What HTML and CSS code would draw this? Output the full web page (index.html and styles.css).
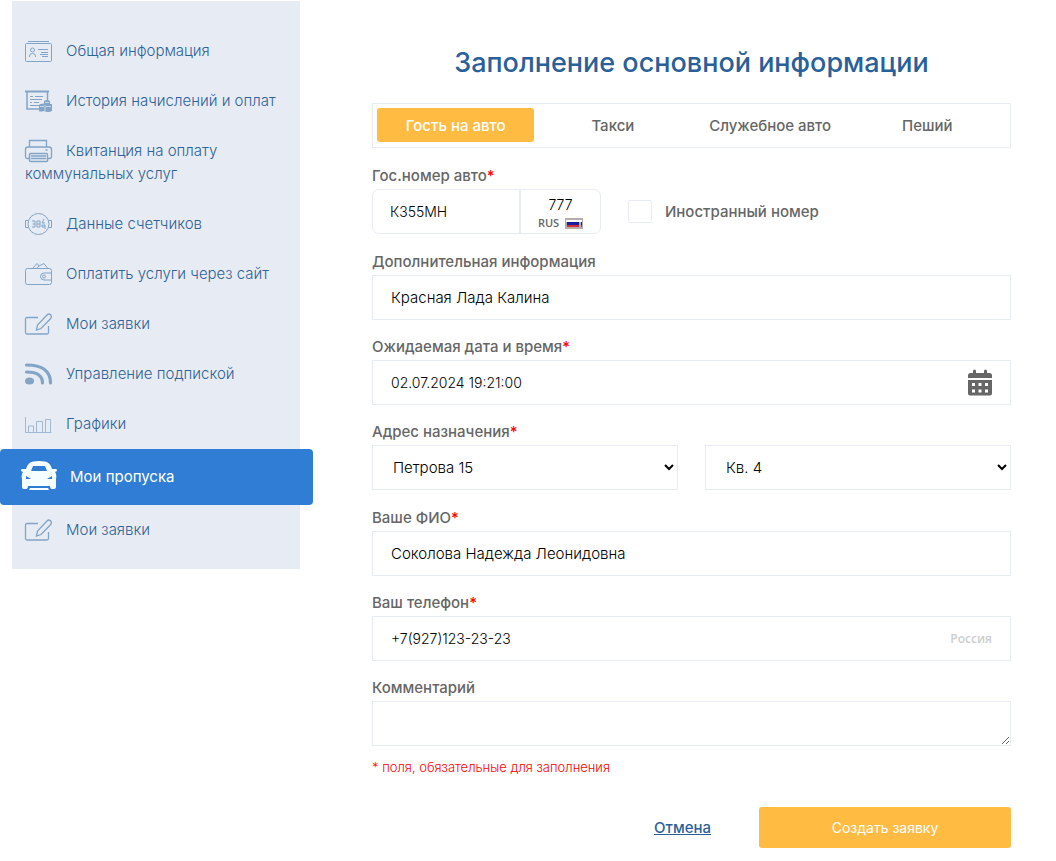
FILE: index.html
```html
<!DOCTYPE html>
<html lang="ru">
<head>
<meta charset="utf-8">
<meta name="viewport" content="width=device-width, initial-scale=1">
<title>Мои пропуска</title>
<link rel="stylesheet" href="styles.css">
</head>
<body>
<div class="page">
  <nav class="sidebar">
    <a class="nav-item" href="#"><svg class="nav-icon" viewBox="0 0 27 22"><path d="M3 1.500h21" /><rect x=".5" y="3.500" width="26" height="18" rx="1"/><circle cx="7.500" cy="10" r="2"/><path d="M4.500 17v-1q0-2.500 3-2.500t3 2.500v1M13 9.500h10M16 12.500h7M15 14.500h8M17 16.500h6"/></svg>Общая информация</a>
    <a class="nav-item" href="#"><svg class="nav-icon" viewBox="0 0 27 22"><path d="M0 1.500h24" stroke-width="2"/><path d="M2 2v17h12M22.500 2v8" stroke-width="1.500"/><path d="M5 6.500h3M10 6.500h8M5 9.500h12M5 12.500h2M9 12.500h5M5 15.500h9"/><path class="solid" d="M19 11.500q0-1.500 3-1.500t3 1.500V14h2v7q-2 1-4 1t-4-1q-4 1-5 0v-6q1-1.500 5-1.500z"/><path class="cut" d="M15 16.500h4M21 16.500h5M20 15v6M20 12.500h4"/></svg>История начислений и оплат</a>
    <a class="nav-item" href="#"><svg class="nav-icon" viewBox="0 0 27 22"><path d="M4.500 7V.5h17V7M4 18.500H2.500q-2 0-2-2v-7q0-2.500 2.500-2.500h21q2.500 0 2.500 2.500v7q0 2-2 2H23" stroke-width="1.300"/><rect x="4.500" y="13.500" width="18" height="8" rx="1" stroke-width="1.500"/><path d="M6 16h15M6 18.500h15M20.500 10h2" stroke-width="1.500"/></svg>Квитанция на оплату коммунальных услуг</a>
    <a class="nav-item" href="#"><svg class="nav-icon" viewBox="0 0 27 22"><circle cx="13.500" cy="11" r="10.500"/><path d="M3 7.500H.5v7H3M24 7.500h2.500v7H24M7 8h3v6H7M7.500 11H10M12 8h3v6h-3zM12 11h3M19 6l-2 4h3M17 12h3v4M17 12v2h3"/></svg>Данные счетчиков</a>
    <a class="nav-item" href="#"><svg class="nav-icon" viewBox="0 0 27 22"><path d="M8 5l4-4.500L14 3l-2 2M14 3l5-2.500L22.500 5"/><rect x=".5" y="5.500" width="26" height="16" rx="2"/><path d="M26.500 10H19a3 3 0 0 0 0 7h7.500"/><circle cx="19" cy="13.500" r="1.500"/></svg>Оплатить услуги через сайт</a>
    <a class="nav-item" href="#"><svg class="nav-icon" viewBox="0 0 27 22"><path d="M13 4.500H2q-1.500 0-1.500 1.500v13.500q0 1.500 1.500 1.500h20q1.500 0 1.500-1.500V13" stroke-width="1.300"/><path d="M11.500 17l1-5L22 2q1.800-1.800 3.500-.2T25.700 5.500L16 15.500z" stroke-width="1.300"/></svg>Мои заявки</a>
    <a class="nav-item" href="#"><svg class="nav-icon" viewBox="0 0 27 22"><ellipse class="solid" cx="4.500" cy="18" rx="4.500" ry="3.500"/><path d="M1.500 9q16 0 16 11M1.500 2q24 0 24 18" stroke-width="3.200" stroke-linecap="round"/></svg>Управление подпиской</a>
    <a class="nav-item" href="#"><svg class="nav-icon" viewBox="0 0 27 22"><path d="M.5 4v15.500h26M3.500 19v-6h5v6M11.500 19V8.500h6V19M20.500 19V6.500h5V19" stroke-opacity=".7"/></svg>Графики</a>
    <a class="nav-item nav-item-active" href="#" aria-current="page"><svg class="car-icon" viewBox="0 0 36 30"><path fill-rule="evenodd" d="M5 8Q7 1 12 .5Q18-.5 24 .5Q29 1 31 8h4q1 0 1 2l-2 1q2 2 1 7v8q0 2-2 2h-2q-2 0-2-3H7q0 3-2 3H3q-2 0-2-2v-8q-1-5 1-7l-2-1Q0 8 1 8zM12 5l-2 5h16l-2-5zM5 15v3h5zM31 15v3h-5z"/><path d="M9 27h18l1 2H8z"/></svg>Мои пропуска</a>
    <a class="nav-item" href="#"><svg class="nav-icon" viewBox="0 0 27 22"><path d="M13 4.500H2q-1.500 0-1.500 1.500v13.500q0 1.500 1.500 1.500h20q1.500 0 1.500-1.500V13" stroke-width="1.300"/><path d="M11.500 17l1-5L22 2q1.800-1.800 3.500-.2T25.700 5.500L16 15.500z" stroke-width="1.300"/></svg>Мои заявки</a>
  </nav>

  <main class="content">
    <h1 class="title">Заполнение основной информации</h1>
    <div class="tabs">
      <button class="tab tab-active" type="button">Гость на авто</button>
      <button class="tab" type="button">Такси</button>
      <button class="tab" type="button">Служебное авто</button>
      <button class="tab" type="button">Пеший</button>
    </div>
    <form class="form">
      <div class="field">
        <label class="label" for="plate">Гос.номер авто<span class="required">*</span></label>
        <div class="plate-row">
          <div class="plate">
            <input class="plate-number" id="plate" type="text" value="К355МН">
            <div class="plate-side">
              <input class="plate-region" type="text" value="777" aria-label="Код региона">
              <span class="plate-country">RUS
                <svg class="flag" viewBox="0 0 18 11"><path fill="#b5acb0" d="M0 0h18v11H0z"/><path fill="#fff" d="M1 2h16v2H1z"/><path fill="#17209b" d="M2 4h12v3H2z"/><path fill="#d32d35" d="M2 7h12v2H2z"/><path fill="#17209b" d="M16 4h1v3h-1z"/><path fill="#d32d35" d="M16 7h1v2h-1z"/></svg>
              </span>
            </div>
          </div>
          <label class="foreign"><input class="checkbox" type="checkbox">Иностранный номер</label>
        </div>
      </div>
      <div class="field">
        <label class="label" for="info">Дополнительная информация</label>
        <div class="control"><input class="input" id="info" type="text" value="Красная Лада Калина"></div>
      </div>
      <div class="field">
        <label class="label" for="date">Ожидаемая дата и время<span class="required">*</span></label>
        <div class="control">
          <input class="input input-digits" id="date" type="text" value="02.07.2024 19:21:00">
          <button class="calendar" type="button" aria-label="Выбрать дату"><svg class="calendar-icon" viewBox="0 0 24 27"><path fill-rule="evenodd" d="M5 4V2q0-1.500 1.500-1.500T8 2v2h8V2q0-1.500 1.500-1.500T19 2v2h2.500Q24 4 24 6.500V9H0V6.500Q0 4 2.500 4zM0 11h24v13.500q0 2-2 2H2q-2 0-2-2zM4 14v3h3v-3zM10.500 14v3h3v-3zM17 14v3h3v-3zM4 20.500v3h3v-3zM10.500 20.500v3h3v-3zM17 20.500v3h3v-3z"/></svg></button>
        </div>
      </div>
      <div class="field">
        <label class="label" for="address">Адрес назначения<span class="required">*</span></label>
        <div class="address-row">
          <select class="select" id="address"><option>Петрова 15</option></select>
          <select class="select" aria-label="Квартира"><option>Кв. 4</option></select>
        </div>
      </div>
      <div class="field">
        <label class="label" for="name">Ваше ФИО<span class="required">*</span></label>
        <div class="control"><input class="input" id="name" type="text" value="Соколова Надежда Леонидовна"></div>
      </div>
      <div class="field">
        <label class="label" for="phone">Ваш телефон<span class="required">*</span></label>
        <div class="control"><input class="input input-digits" id="phone" type="tel" value="+7(927)123-23-23"><span class="country">Россия</span></div>
      </div>
      <div class="field">
        <label class="label" for="comment">Комментарий</label>
        <textarea class="comment" id="comment"></textarea>
      </div>
      <p class="note">* поля, обязательные для заполнения</p>
      <div class="actions">
        <a class="cancel" href="#">Отмена</a>
        <button class="submit" type="submit">Создать заявку</button>
      </div>
    </form>
  </main>
</div>
</body>
</html>
```
FILE: styles.css
```css
* {
  box-sizing: border-box;
}

body {
  margin: 0;
  background: #fff;
  color: #000;
  font-family: Inter, "Open Sans", sans-serif;
  font-size: 14px;
}

button,
input,
select,
textarea {
  font: inherit;
  color: inherit;
}

.page {
  display: flex;
  align-items: flex-start;
  gap: 72px;
  padding: 1px 45px 12px 12px;
}

.sidebar {
  flex: 0 0 288px;
  padding: 25px 0 14px;
  background: #e7ecf4;
}

.nav-item {
  display: block;
  padding: 13px 13px 14px;
  color: #2f6299;
  font-size: 15px;
  font-weight: 300;
  line-height: 23px;
  text-decoration: none;
}

.nav-icon {
  float: left;
  width: 27px;
  height: 22px;
  margin: 1px 14px 0 0;
  fill: none;
  stroke: #82a4c6;
  overflow: visible;
}

.nav-icon .solid {
  fill: #82a4c6;
  stroke: none;
}

.nav-icon .cut {
  stroke: #e7ecf4;
  stroke-opacity: .7;
}

.nav-item-active {
  display: flex;
  align-items: center;
  gap: 13px;
  height: 56px;
  margin: 0 -13px 0 -12px;
  padding: 0 21px 2px;
  border-radius: 4px;
  background: #2f7dd5;
  color: #fff;
  font-weight: 400;
}

.car-icon {
  width: 36px;
  height: 30px;
  fill: #f5ffff;
}

.content {
  flex: 1;
  min-width: 0;
}

.title {
  margin: 0;
  padding: 44px 0 22px;
  color: #2a6099;
  font-size: 27px;
  font-weight: 500;
  line-height: 36px;
  text-align: center;
}

.tabs {
  display: grid;
  grid-template-columns: repeat(4, 1fr);
  height: 45px;
  padding: 4px;
  border: 1px solid #e7ecf4;
}

.tab {
  height: 34px;
  padding: 0;
  border: 0;
  border-radius: 3px;
  background: none;
  color: #666;
  font-size: 15px;
  font-weight: 500;
}

.tab-active {
  background: #ffbb42;
  color: #fff;
}

.form {
  padding-top: 18px;
}

.field {
  margin-bottom: 17px;
}

.label {
  display: block;
  margin-bottom: 3px;
  color: #666;
  font-size: 15px;
  font-weight: 500;
  line-height: 20px;
}

.required {
  color: #f00;
}

.control {
  display: flex;
  align-items: center;
  height: 45px;
  padding: 0 18px;
  border: 1px solid #e7ecf4;
}

.input {
  flex: 1;
  min-width: 0;
  height: 43px;
  padding: 0;
  border: 0;
  background: none;
  font-size: 15px;
  font-weight: 300;
  outline: 0;
}

.input-digits {
  font-size: 14px;
}

.plate-row,
.address-row {
  min-height: 46px;
}

.plate-row {
  display: flex;
  align-items: flex-start;
  gap: 27px;
}

.plate {
  display: flex;
  width: 229px;
  height: 45px;
  border: 1px solid #e7ecf4;
  border-radius: 7px;
}

.plate-number {
  flex: 1;
  min-width: 0;
  padding: 0 17px;
  border: 0;
  border-right: 2px solid #e7ecf4;
  background: none;
  font-weight: 300;
}

.plate-side {
  display: flex;
  flex-direction: column;
  align-items: center;
  width: 79px;
  padding-top: 4px;
}

.plate-region {
  width: 60px;
  height: 20px;
  padding: 0;
  border: 0;
  background: none;
  font-weight: 300;
  text-align: center;
}

.plate-country {
  display: flex;
  align-items: center;
  gap: 6px;
  color: #666;
  font-family: "Open Sans", sans-serif;
  font-size: 11px;
  font-weight: 600;
  line-height: 18px;
}

.flag {
  width: 18px;
  height: 11px;
}

.foreign {
  display: flex;
  align-items: center;
  gap: 13px;
  height: 45px;
  color: #666;
  font-size: 15px;
  font-weight: 500;
}

.checkbox {
  appearance: none;
  width: 24px;
  height: 23px;
  margin: 0;
  border: 1px solid #e7ecf4;
  border-radius: 2px;
}

.checkbox:checked {
  background: #2f7dd5;
}

.calendar {
  display: flex;
  padding: 0;
  border: 0;
  background: none;
}

.calendar-icon {
  width: 24px;
  height: 27px;
  fill: #666;
}

.address-row {
  display: grid;
  grid-template-columns: 1fr 1fr;
  gap: 27px;
}

.select {
  width: 100%;
  height: 45px;
  padding: 0 0 0 16px;
  border: 1px solid #e7ecf4;
  border-radius: 0;
  background-color: #fff;
  font-size: 15px;
  font-weight: 300;
}

.country {
  color: #ccc;
  font-family: "Open Sans", sans-serif;
  font-size: 12px;
  font-weight: 600;
}

.comment {
  display: block;
  width: 100%;
  height: 45px;
  padding: 10px 18px;
  border: 1px solid #e7ecf4;
  resize: vertical;
}

.note {
  margin: 0;
  color: #f00;
  font-size: 13px;
  font-weight: 300;
  line-height: 18px;
}

.field + .note {
  margin-top: -5px;
}

.actions {
  display: flex;
  align-items: center;
  justify-content: flex-end;
  gap: 48px;
  margin-top: 31px;
}

.cancel {
  color: #2a6099;
  font-size: 15px;
  font-weight: 500;
}

.submit {
  width: 252px;
  height: 41px;
  border: 0;
  border-radius: 3px;
  background: #ffbb42;
  color: #fff;
}
```
